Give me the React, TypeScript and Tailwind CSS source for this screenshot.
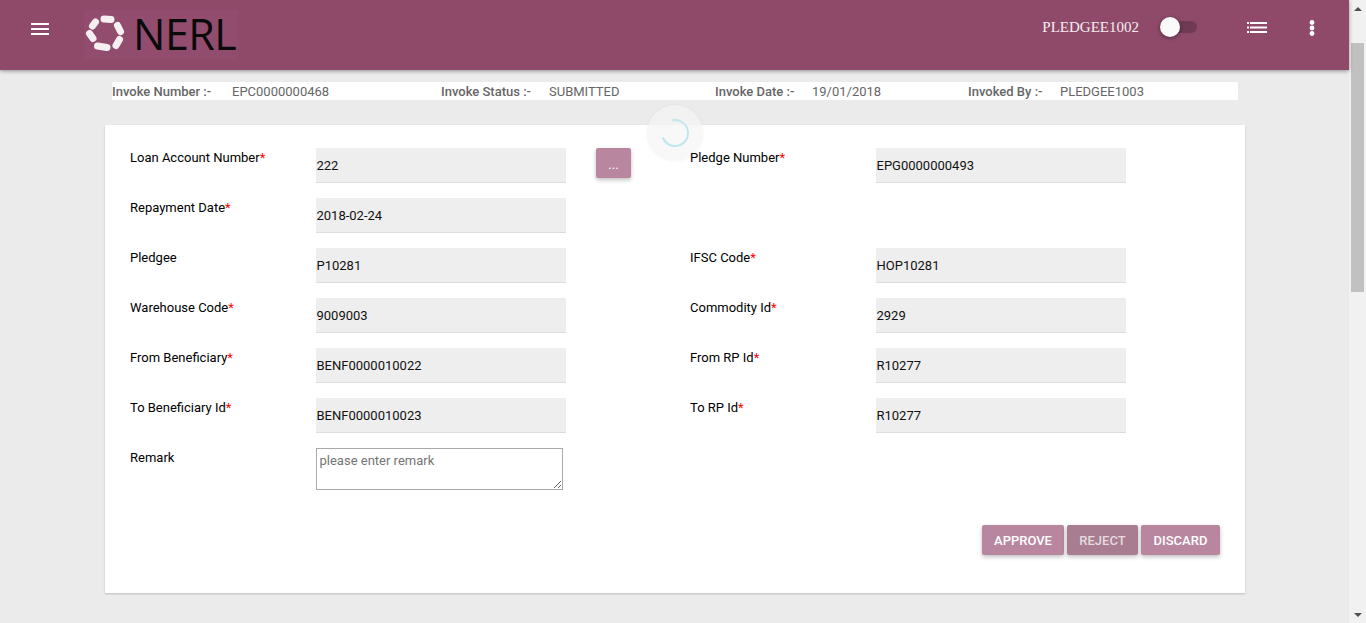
const roboto = "font-['Roboto',sans-serif]"

type Field = { label: string; req?: boolean; value: string }

const rows: { left?: Field; right?: Field; browse?: boolean }[] = [
  { left: { label: 'Loan Account Number', req: true, value: '222' }, right: { label: 'Pledge Number', req: true, value: 'EPG0000000493' }, browse: true },
  { left: { label: 'Repayment Date', req: true, value: '2018-02-24' } },
  { left: { label: 'Pledgee', value: 'P10281' }, right: { label: 'IFSC Code', req: true, value: 'HOP10281' } },
  { left: { label: 'Warehouse Code', req: true, value: '9009003' }, right: { label: 'Commodity Id', req: true, value: '2929' } },
  { left: { label: 'From Beneficiary', req: true, value: 'BENF0000010022' }, right: { label: 'From RP Id', req: true, value: 'R10277' } },
  { left: { label: 'To Beneficiary Id', req: true, value: 'BENF0000010023' }, right: { label: 'To RP Id', req: true, value: 'R10277' } },
]

function Label({ field, width }: { field: Field; width: string }) {
  return (
    <div className={`${width} shrink-0 relative z-10 pt-[2px] text-[13px] leading-[16px] text-[#000]`}>
      {field.label}
      {field.req && <span className="text-[#f00]">*</span>}
    </div>
  )
}

function Value({ value }: { value: string }) {
  return (
    <div className="w-[250px] h-[35px] shrink-0 bg-[#eeeeee] border-b border-[#dddddd] pt-[10px] pl-[0.5px] text-[13px] leading-[16px] text-[#111]">
      {value}
    </div>
  )
}

function Info({ label, value, labelW, w }: { label: string; value: string; labelW: string; w: string }) {
  return (
    <div className={`flex ${w} shrink-0 pt-[1px] text-[13px] leading-[18px]`}>
      <span className={`${labelW} shrink-0 font-medium text-[#666]`}>{label}</span>
      <span className="text-[#666]">{value}</span>
    </div>
  )
}

function Logo() {
  return (
    <div className="flex items-center w-[154px] h-[49px] bg-[#924c6e]">
      <svg width="46" height="49" viewBox="4 2 46 49" className="shrink-0" fill="none" stroke="#f4eff1" strokeWidth="7" strokeLinecap="round">
        <path d="M24 11 L31 11.5" />
        <path d="M37.5 17.5 L40.5 23.5" />
        <path d="M39.5 31.5 L36 37.5" />
        <path d="M27 39.5 L17.5 38" />
        <path d="M13 30.5 L9.5 25.5" />
        <path d="M12.5 18 L15.5 14" />
      </svg>
      <span className="ml-[3px] mt-[-3px] font-['Open_Sans',sans-serif] font-medium text-[43px] leading-[49px] tracking-[-0.5px] text-[#0a0a0a]">NERL</span>
    </div>
  )
}

function Scrollbar() {
  return (
    <div className="w-[17px] h-full shrink-0 bg-[#f1f1f1] flex flex-col items-center relative">
      <div className="h-[17px] w-full flex items-center justify-center">
        <div className="w-0 h-0 border-x-[4px] border-x-transparent border-b-[4px] border-b-[#505050]" />
      </div>
      <div className="mt-[26px] h-[249px] w-[13px] bg-[#c1c1c1]" />
      <div className="mt-auto h-[17px] w-full flex items-center justify-center">
        <div className="w-0 h-0 border-x-[4px] border-x-transparent border-t-[4px] border-t-[#505050]" />
      </div>
    </div>
  )
}

export default function App() {
  return (
    <div className={`flex w-[1366px] h-[623px] overflow-hidden bg-[#ebebeb] ${roboto}`}>
      <div className="flex-1 min-w-0 flex flex-col relative">
        <header className="h-[70px] shrink-0 bg-[#8f4a6a] shadow-[0_1px_4px_rgba(0,0,0,0.4)] flex items-center relative z-10">
          <div className="ml-[31px] w-[18px] flex flex-col gap-[3px] mt-[-13px]">
            <div className="h-[2px] bg-white" />
            <div className="h-[2px] bg-white" />
            <div className="h-[2px] bg-white" />
          </div>
          <div className="ml-[35px] mt-[-1px]">
            <Logo />
          </div>
          <div className="ml-auto flex items-center h-[20px] mt-[-16px]">
            <span className="font-['Liberation_Serif',serif] text-[15px] text-[#f6eef2] mt-[1px]">PLEDGEE1002</span>
            <div className="relative ml-[21px] w-[37px] h-[12px] rounded-full bg-[#6f3a54]">
              <div className="absolute left-0 top-[-4px] w-[20px] h-[20px] rounded-full bg-[#fafafa] shadow-[0_1px_4px_rgba(0,0,0,0.45)]" />
            </div>
            <svg width="20" height="11" viewBox="0 0 20 11" className="ml-[50px] mt-[1px]" fill="#fff">
              <rect x="0" y="0" width="2" height="2" />
              <rect x="3" y="0" width="17" height="2" />
              <rect x="0" y="4.5" width="2" height="2" />
              <rect x="3" y="4.5" width="17" height="2" />
              <rect x="0" y="9" width="2" height="2" />
              <rect x="3" y="9" width="17" height="2" />
            </svg>
            <svg width="6" height="16" viewBox="0 0 6 16" className="ml-[42px] mr-[34px] mt-[1px]" fill="#fff">
              <circle cx="3" cy="2.5" r="2.4" />
              <circle cx="3" cy="8" r="2.4" />
              <circle cx="3" cy="13.5" r="2.4" />
            </svg>
          </div>
        </header>

        <div className="ml-[112px] mt-[12px] w-[1126px] h-[18px] bg-white flex">
          <Info label="Invoke Number :-" value="EPC0000000468" labelW="w-[120px]" w="w-[329px]" />
          <Info label="Invoke Status :-" value="SUBMITTED" labelW="w-[108px]" w="w-[274px]" />
          <Info label="Invoke Date :-" value="19/01/2018" labelW="w-[97px]" w="w-[253px]" />
          <Info label="Invoked By :-" value="PLEDGEE1003" labelW="w-[92px]" w="w-[200px]" />
        </div>

        <main className="ml-[105px] mt-[25px] w-[1140px] h-[468px] bg-white shadow-[0_1px_2px_rgba(0,0,0,0.2)] pl-[25px] pt-[23px] relative">
          {rows.map((row, i) => (
            <div key={i} className="flex h-[50px]">
              <div className="flex w-[436px] shrink-0">
                {row.left && (
                  <>
                    <Label field={row.left} width="w-[186px]" />
                    <Value value={row.left.value} />
                  </>
                )}
              </div>
              <div className="w-[124px] shrink-0">
                {row.browse && (
                  <button className="w-[35px] h-[30px] ml-[30px] pt-[3px] rounded-[2px] bg-[#b8879f] text-white text-[13px] shadow-[0_2px_4px_rgba(0,0,0,0.25)]">
                    ...
                  </button>
                )}
              </div>
              {row.right && (
                <div className="flex">
                  <Label field={row.right} width="w-[186px]" />
                  <Value value={row.right.value} />
                </div>
              )}
            </div>
          ))}
          <div className="flex">
            <Label field={{ label: 'Remark', value: '' }} width="w-[186px]" />
            <textarea
              readOnly
              placeholder="please enter remark"
              className="w-[247px] h-[42px] border border-[#a9a9a9] px-[2.5px] pt-[4px] text-[13px] leading-[15px] text-[#333] placeholder:text-[#757575] resize-y outline-none"
            />
          </div>

          <div className="flex gap-[3px] ml-[852px] mt-[35px]">
            <button className="w-[82px] h-[30px] pt-[1px] rounded-[2px] bg-[#b8879f] text-white text-[13px] font-medium shadow-[0_2px_4px_rgba(0,0,0,0.25)]">APPROVE</button>
            <button className="w-[71px] h-[30px] pt-[1px] rounded-[2px] bg-[#a87d92] text-[#e6dade] text-[13px] font-medium shadow-[0_2px_4px_rgba(0,0,0,0.25)]">REJECT</button>
            <button className="w-[79px] h-[30px] pt-[1px] rounded-[2px] bg-[#b8879f] text-white text-[13px] font-medium shadow-[0_2px_4px_rgba(0,0,0,0.25)]">DISCARD</button>
          </div>

          {/* loading spinner sits over the card */}
          <div className="absolute left-[542px] top-[-20px] w-[56px] h-[56px] rounded-full bg-[#f5f5f5]/70 shadow-[0_0_3px_rgba(0,0,0,0.06)] flex items-center justify-center">
            <svg width="30" height="30" viewBox="0 0 30 30" fill="none">
              <path d="M13 2.2 A13 13 0 1 1 3 20" stroke="#bfe8ee" strokeWidth="2" strokeLinecap="round" />
            </svg>
          </div>
        </main>
      </div>
      <Scrollbar />
    </div>
  )
}
